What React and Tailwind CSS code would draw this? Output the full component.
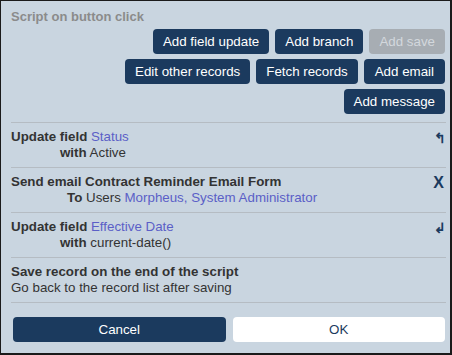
import React from "react"

const btn =
  "h-[25px] rounded-[4px] bg-[#1b3a5e] px-[10px] text-[13.33px] leading-[25px] text-white"

function Item({ children, icon }) {
  return (
    <div className="flex h-[45px] items-start justify-between border-t border-[#b5bcc3] pt-[6px] text-[13.33px] leading-[16px] text-[#333]">
      <div>{children}</div>
      {icon}
    </div>
  )
}

export default function App() {
  return (
    <div
      className="flex h-[355px] w-[452px] flex-col border-t border-l border-r-2 border-b-2 border-[#1a1a1a] bg-[#c9d5e0]"
      style={{ fontFamily: '"Liberation Sans", Arial, sans-serif' }}
    >
      <div className="pl-[10px] pr-[4px]">
        <div className="pt-[8px] text-[13px] font-bold leading-[16px] text-[#8b8b8b]">Script on button click</div>

        <div className="mt-[4px] flex flex-col items-end gap-[5px] pr-[1px]">
          <div className="flex gap-[6px]">
            <button className={btn}>Add field update</button>
            <button className={btn}>Add branch</button>
            <button className="h-[25px] rounded-[4px] bg-[#a7adb3] px-[10px] text-[13.33px] leading-[25px] text-[#d3d8dd]">Add save</button>
          </div>
          <div className="flex gap-[6px]">
            <button className={btn}>Edit other records</button>
            <button className={btn}>Fetch records</button>
            <button className="h-[25px] rounded-[4px] bg-[#1b3a5e] px-[11px] text-[13.33px] leading-[25px] text-white">Add email</button>
          </div>
          <div className="flex gap-[6px]">
            <button className={btn}>Add message</button>
          </div>
        </div>

        <div className="mt-[8px] border-b border-[#b5bcc3]">
          <Item icon={<span className="pt-[1px] text-[14px] font-bold text-[#1b3a5e]">↰</span>}>
            <div>
              <b>Update field</b> <span className="text-[#5b5fc7]">Status</span>
            </div>
            <div className="pl-[49px]">
              <b>with</b> Active
            </div>
          </Item>
          <Item icon={<span className="pr-[2px] pt-[1px] text-[16px] font-bold text-[#1b3a5e]">X</span>}>
            <div className="font-bold">Send email Contract Reminder Email Form</div>
            <div className="pl-[56px]">
              <b>To</b> Users <span className="text-[#5b5fc7]">Morpheus, System Administrator</span>
            </div>
          </Item>
          <Item icon={<span className="pt-[1px] text-[14px] font-bold text-[#1b3a5e]">↲</span>}>
            <div>
              <b>Update field</b> <span className="text-[#5b5fc7]">Effective Date</span>
            </div>
            <div className="pl-[49px]">
              <b>with</b> current-date()
            </div>
          </Item>
          <Item>
            <div className="font-bold">Save record on the end of the script</div>
            <div>Go back to the record list after saving</div>
          </Item>
        </div>
      </div>

      <div className="mt-[14px] flex gap-[7px] pl-[12px] pr-[5px]">
        <button className="h-[25px] flex-1 rounded-[4px] bg-[#1b3a5e] text-[13.33px] text-white">Cancel</button>
        <button className="h-[25px] flex-1 rounded-[4px] bg-white text-[13.33px] text-[#1b3a5e]">OK</button>
      </div>
    </div>
  )
}
